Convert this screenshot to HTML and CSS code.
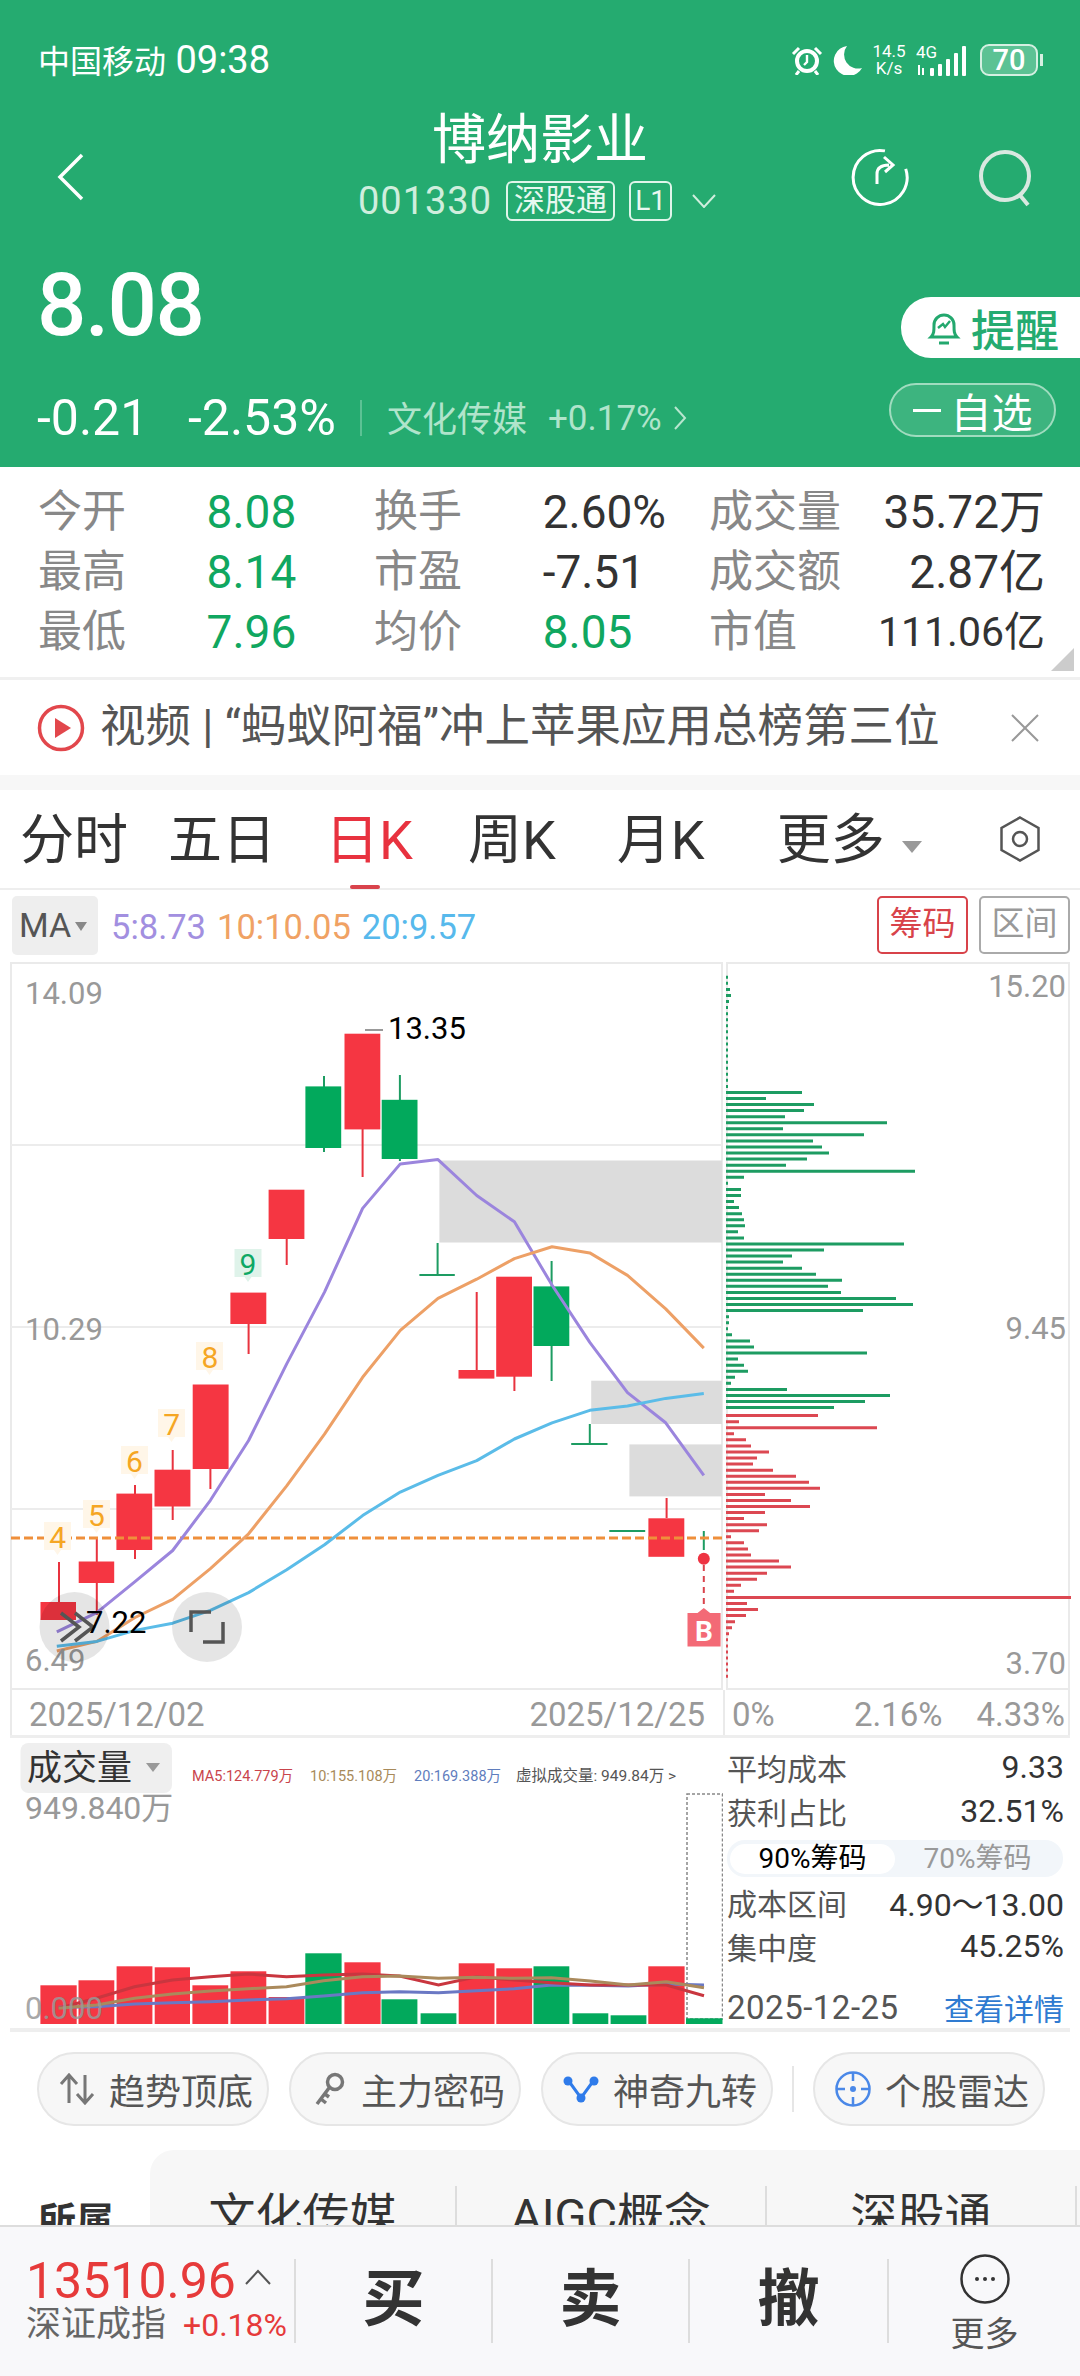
FILE: index.html
```html
<!DOCTYPE html>
<html lang="zh-CN">
  <head>
    <meta charset="UTF-8" />
    <meta name="viewport" content="width=device-width, initial-scale=1.0" />
    <title>博纳影业</title>
    <link rel="stylesheet" href="styles.css">
  </head>
  <body>
    <div class="page">
      <!-- Green stock header -->
      <header class="header">
        <div class="status">
          <div class="carrier"><span class="carrier-name">中国移动</span> <span>09:38</span></div>
          <div class="status-icons">
            <svg class="alarm" viewBox="0 0 32 30" width="32" height="30">
              <circle cx="16" cy="16" r="10" fill="none" stroke="#fff" stroke-width="4" />
              <path d="M16 10v7l-3 3" fill="none" stroke="#fff" stroke-width="2.4" />
              <path d="M2 9l6-6M30 9l-6-6M8 26l-3 4M24 26l3 4" stroke="#fff" stroke-width="3" />
            </svg>
            <svg class="moon" viewBox="0 0 30 30" width="30" height="30">
              <path d="M15 1a15 15 0 1 0 15 22A14 14 0 0 1 15 1z" fill="#fff" />
            </svg>
            <div class="speed">14.5<br />K/s</div>
            <svg class="signal" viewBox="0 0 54 34" width="54" height="34">
              <text class="net-text" x="0" y="15">4G</text>
              <path d="M3 22v10M7 25v7" stroke="#fff" stroke-width="2" />
              <rect x="14" y="25" width="4" height="8" rx="1" fill="#fff" />
              <rect x="22" y="21" width="4" height="12" rx="1" fill="#fff" />
              <rect x="30" y="16" width="4" height="17" rx="1" fill="#fff" />
              <rect x="38" y="10" width="4" height="23" rx="1" fill="#fff" />
              <rect x="46" y="3" width="4" height="30" rx="1" fill="#fff" />
            </svg>
            <div class="battery"><span class="battery-body">70</span><span class="battery-tip"></span></div>
          </div>
        </div>

        <div class="nav">
          <div class="nav-left">
            <svg viewBox="0 0 28 48" width="28" height="48">
              <path d="M25 2L3 24l22 22" fill="none" stroke="#fff" stroke-width="3.5" />
            </svg>
          </div>
          <div class="nav-center">
            <div class="stock-name">博纳影业</div>
            <div class="stock-sub">
              <span class="stock-code">001330</span>
              <span class="tag">深股通</span>
              <span class="tag tag-l1">L1</span>
              <svg class="sub-arrow" viewBox="0 0 24 14" width="24" height="14">
                <path d="M1 1l11 12L23 1" fill="none" stroke="#cfeedd" stroke-width="2" />
              </svg>
            </div>
          </div>
          <div class="nav-right">
            <svg viewBox="0 0 60 60" width="60" height="60">
              <path d="M41 7A27 27 0 1 0 56 30" fill="none" stroke="#fff" stroke-width="3" transform="rotate(-16 30 31)" />
              <path d="M26 38V28c0-6 4-9 12-9M33 11l9 8-8 7" fill="none" stroke="#fff" stroke-width="3" />
            </svg>
            <svg class="search-icon" viewBox="0 0 56 58" width="56" height="58">
              <circle cx="27" cy="26" r="24" fill="none" stroke="#d9e8e0" stroke-width="4" />
              <path d="M41 44l9 11" stroke="#d9e8e0" stroke-width="4" />
            </svg>
          </div>
        </div>

        <div class="quote">
          <div class="quote-left">
            <div class="price">8.08</div>
            <div class="change">
              <span class="change-num">-0.21</span>
              <span class="change-pct">-2.53%</span>
              <span class="change-sep"></span>
              <span class="sector">文化传媒</span>
              <span class="sector-pct">+0.17%</span>
              <svg viewBox="0 0 14 26" width="14" height="26">
                <path d="M2 2l10 11L2 24" fill="none" stroke="#b7e6cf" stroke-width="2" />
              </svg>
            </div>
          </div>
          <div class="quote-right">
            <div class="remind">
              <svg viewBox="0 0 36 40" width="36" height="40">
                <path d="M5 29c3-3 3-6 3-12a10 10 0 0 1 20 0c0 6 0 9 3 12z" fill="none" stroke="#23a86e" stroke-width="3" />
                <path d="M12 20l5-4 2 3 5-6" fill="none" stroke="#23a86e" stroke-width="2.4" />
                <path d="M13 35h10" stroke="#23a86e" stroke-width="3" />
              </svg>
              <span>提醒</span>
            </div>
            <div class="watch"><span class="watch-dash"></span><span>自选</span></div>
          </div>
        </div>
      </header>

      <!-- Quote figures -->
      <section class="stats">
        <span class="label">今开</span><span class="num down">8.08</span>
        <span class="label">换手</span><span class="num">2.60%</span>
        <span class="label">成交量</span><span class="num right">35.72万</span>
        <span class="label">最高</span><span class="num down">8.14</span>
        <span class="label">市盈</span><span class="num">-7.51</span>
        <span class="label">成交额</span><span class="num right">2.87亿</span>
        <span class="label">最低</span><span class="num down">7.96</span>
        <span class="label">均价</span><span class="num down">8.05</span>
        <span class="label">市值</span><span class="num right narrow">111.06亿</span>
        <span class="stats-corner"></span>
      </section>

      <section class="news">
        <svg viewBox="0 0 48 48" width="48" height="48">
          <circle cx="24" cy="24" r="21.5" fill="none" stroke="#e2474c" stroke-width="3.5" />
          <path d="M18 14l16 10-16 10z" fill="#e2474c" />
        </svg>
        <span class="news-text">视频 | “蚂蚁阿福”冲上苹果应用总榜第三位</span>
        <svg class="news-close" viewBox="0 0 28 28" width="28" height="28">
          <path d="M1 1l26 26M27 1L1 27" stroke="#999" stroke-width="2" />
        </svg>
      </section>
      <div class="band"></div>

      <!-- Period tabs -->
      <nav class="tabs">
        <span class="tab tab-a">分时</span>
        <span class="tab tab-b">五日</span>
        <span class="tab tab-c active">日K</span>
        <span class="tab tab-d">周K</span>
        <span class="tab tab-e">月K</span>
        <span class="tab tab-f">更多<i class="tab-tri"></i></span>
        <svg class="tab-gear" viewBox="0 0 42 46" width="42" height="46">
          <path d="M21 1.5L39.5 12v22L21 44.5 2.5 34V12z" fill="none" stroke="#555" stroke-width="2.5" />
          <circle cx="21" cy="23" r="7" fill="none" stroke="#555" stroke-width="2.5" />
        </svg>
      </nav>

      <div class="toolbar">
        <div class="ma-box">MA<i class="small-tri"></i></div>
        <div class="ma-values">
          <span class="c-ma5">5:8.73</span>
          <span class="c-ma10">10:10.05</span>
          <span class="c-ma20">20:9.57</span>
        </div>
        <span class="tool-btn tool-on">筹码</span>
        <span class="tool-btn">区间</span>
      </div>

      <!-- Candlestick chart and chip distribution -->
      <div class="chart-row">
        <svg class="kline" viewBox="10 962 713 728" width="713" height="728">
          <rect class="frame" x="11" y="963" width="711" height="726" />
          <path class="grid" d="M11 1145H722M11 1327H722M11 1509H722" />

          <rect class="box" x="439.4" y="1160.5" width="282.6" height="82" />
          <rect class="box" x="591.2" y="1380.7" width="130.8" height="43.3" />
          <rect class="box" x="629.4" y="1444.4" width="92.6" height="52" />

          <path class="wick-red" d="M59 1562v40M96.8 1539v76M135 1485v74M172.7 1450v70M210.4 1469v20M248.6 1324v30M286.7 1239v26M362.6 1129v48M476.7 1292v78M514.4 1376v15M666.6 1498v20" />
          <path class="wick-green" d="M324 1076v76M399.9 1075v86M551.6 1261v120M437.6 1243v32M419.4 1275h35.4M589.8 1424v20M571.2 1444h36.3M609.3 1531h35.9M703.8 1531v19" />

          <rect class="red" x="40.5" y="1602" width="35.5" height="18" />
          <rect class="red" x="78.7" y="1561.5" width="35.5" height="21.5" />
          <rect class="red" x="116.4" y="1493.6" width="35.8" height="56.4" />
          <rect class="red" x="154.5" y="1469.7" width="35.9" height="36.8" />
          <rect class="red" x="192.7" y="1384.5" width="35.9" height="84.5" />
          <rect class="red" x="230.4" y="1292.6" width="35.9" height="31.4" />
          <rect class="red" x="268.6" y="1189.7" width="35.8" height="49.3" />
          <rect class="green" x="305.4" y="1086.4" width="35.8" height="61.6" />
          <rect class="red" x="344.5" y="1033.7" width="35.8" height="95.7" />
          <rect class="green" x="381.7" y="1099.8" width="35.8" height="59.2" />
          <rect class="red" x="458.5" y="1370" width="35.9" height="8.6" />
          <rect class="red" x="496.2" y="1276.7" width="35.8" height="100" />
          <rect class="green" x="533.5" y="1286.4" width="35.8" height="59.6" />
          <rect class="red" x="648.4" y="1518.3" width="35.9" height="38.5" />

          <path class="price-line" d="M11 1538H722" />

          <polyline class="ma5" points="56.8,1631.9 96.8,1612.7 135,1581.6 172.7,1550.5 210.4,1500.3 248.6,1440.5 286.7,1363.9 324.5,1292.1 362.6,1208.4 400.3,1163.9 438,1159.6 476.7,1195.5 514.4,1221.8 552,1285 589.8,1342.4 627.5,1392.6 665.7,1422.8 703.8,1475.4" />
          <polyline class="ma10" points="56.8,1651 96.8,1641.4 135,1617.5 172.7,1599.3 210.4,1568.7 248.6,1533.8 286.7,1485.9 324.5,1434.2 362.6,1377.3 400.3,1330.4 438,1298.3 476.7,1279.2 514.4,1258.6 552,1246.7 589.8,1252.9 627.5,1275.4 665.7,1308.9 703.8,1348.1" />
          <polyline class="ma20" points="56.8,1646.2 96.8,1641.4 135,1630.4 172.7,1623.2 210.4,1610.3 248.6,1592.6 286.7,1569.7 324.5,1544.8 362.6,1515.6 400.3,1492.1 438,1475.4 476.7,1460.6 514.4,1439 552,1422.8 589.8,1410.3 627.5,1406 665.7,1398.4 703.8,1393.6" />

          <!-- Nine-turn counters -->
          <path class="tag-bg" d="M44 1522h27v28h-10l-3.5 5-3.5-5H44z" />
          <path class="tag-bg" d="M83 1500h27v28h-10l-3.5 5-3.5-5H83z" />
          <path class="tag-bg" d="M121 1446h27v28h-10l-3.5 5-3.5-5h-10z" />
          <path class="tag-bg" d="M158 1409h27v28h-10l-3.5 5-3.5-5h-10z" />
          <path class="tag-bg" d="M196 1342h27v28h-10l-3.5 5-3.5-5h-10z" />
          <path class="tag-bg-green" d="M234.5 1249h27v28h-10l-3.5 5-3.5-5h-10z" />
          <text class="count" x="57.7" y="1548">4</text>
          <text class="count" x="96.4" y="1526">5</text>
          <text class="count" x="134.5" y="1472">6</text>
          <text class="count" x="171.8" y="1435">7</text>
          <text class="count" x="210" y="1368">8</text>
          <text class="count count-green" x="248" y="1275">9</text>

          <path class="note-line" d="M365 1030h18" />
          <text class="note" x="388" y="1039">13.35</text>

          <text class="axis" x="25" y="1004">14.09</text>
          <text class="axis" x="25" y="1340">10.29</text>
          <text class="axis" x="25" y="1671">6.49</text>

          <circle class="float-btn" cx="74.5" cy="1627" r="35" />
          <circle class="float-btn" cx="207" cy="1627" r="35" />
          <path class="float-icon" d="M61 1613l18 14-18 14M75 1613l18 14-18 14" />
          <path class="float-icon" d="M191 1632v-20h20M223 1622v20h-20" />
          <text class="note" x="86" y="1633">7.22</text>

          <circle class="sig-dot" cx="703.8" cy="1558.8" r="6" />
          <path class="sig-dash" d="M703.8 1565v44" />
          <path class="sig-badge" d="M687.5 1613h10l6.3-5 6.3 5h10.5v33.5h-33.1z" />
          <text class="sig-text" x="704" y="1641">B</text>
        </svg>

        <svg class="chips" viewBox="726 962 345 728" width="345" height="728">
          <rect class="frame" x="727" y="963" width="342" height="726" />
          <path class="chip-green" d="M726 977.3h2m-2 6.06h2m-2 6.06h4m-4 6.06h5m-5 6.06h3m-3 6.06h2m-2 6.06h2m-2 6.06h2m-2 6.06h2m-2 6.06h2m-2 6.06h2m-2 6.06h2m-2 6.06h2m-2 6.06h2m-2 6.06h2m-2 6.06h2m-2 6.06h2m-2 6.06h2m-2 6.06h2m-2 6.06h76m-76 6.06h40m-40 6.06h88m-88 6.06h78m-78 6.06h59m-59 6.06h161m-161 6.06h57m-57 6.06h138m-138 6.06h87m-87 6.06h96m-96 6.06h103m-103 6.06h81m-81 6.06h60m-60 6.06h189m-189 6.06h18m-18 6.06h2m-2 6.06h15m-15 6.06h15m-15 6.06h8m-8 6.06h13m-13 6.06h16m-16 6.06h18m-18 6.06h19m-19 6.06h12m-12 6.06h18m-18 6.06h178m-178 6.06h98m-98 6.06h66m-66 6.06h57m-57 6.06h76m-76 6.06h90m-90 6.06h116m-116 6.06h102m-102 6.06h115m-115 6.06h170m-170 6.06h187m-187 6.06h137m-137 6.06h3m-3 6.06h3m-3 6.06h2m-2 6.06h6m-6 6.06h24m-24 6.06h28m-28 6.06h141m-141 6.06h12m-12 6.06h18m-18 6.06h22m-22 6.06h9m-9 6.06h5m-5 6.06h61m-61 6.06h164m-164 6.06h139m-139 6.06h108" />
          <path class="chip-red" d="M726 1415.6h92m-92 6.06h13m-13 6.06h151m-151 6.06h8m-8 6.06h20m-20 6.06h25m-25 6.06h43m-43 6.06h31m-31 6.06h27m-27 6.06h47m-47 6.06h70m-70 6.06h83m-83 6.06h94m-94 6.06h39m-39 6.06h65m-65 6.06h84m-84 6.06h39m-39 6.06h18m-18 6.06h41m-41 6.06h33m-33 6.06h5m-5 6.06h18m-18 6.06h22m-22 6.06h25m-25 6.06h53m-53 6.06h65m-65 6.06h41m-41 6.06h31m-31 6.06h15m-15 6.06h8m-8 6.06h345m-345 6.06h21m-21 6.06h32m-32 6.06h20m-20 6.06h9m-9 6.06h6m-6 6.06h3m-3 6.06h2m-2 6.06h2m-2 6.06h2m-2 6.06h2m-2 6.06h2m-2 6.06h2m-2 6.06h2" />
          <text class="axis axis-end" x="1066" y="997">15.20</text>
          <text class="axis axis-end" x="1066" y="1339">9.45</text>
          <text class="axis axis-end" x="1066" y="1674">3.70</text>
        </svg>
      </div>

      <div class="axis-row">
        <div class="date-axis"><span>2025/12/02</span><span>2025/12/25</span></div>
        <div class="pct-axis"><span>0%</span><span class="pct-mid">2.16%</span><span class="pct-end">4.33%</span></div>
      </div>

      <!-- Volume chart and chip summary -->
      <div class="volume-row">
        <svg class="volume" viewBox="10 1738 713 290" width="713" height="290">
          <rect class="vol-label-bg" x="20.5" y="1743" width="151.5" height="50" rx="8" />
          <text class="vol-label" x="27" y="1780">成交量</text>
          <path class="vol-tri" d="M146 1763h14l-7 9z" />
          <text class="vol-ma vm5" x="192" y="1781">MA5:124.779万</text>
          <text class="vol-ma vm10" x="310" y="1781">10:155.108万</text>
          <text class="vol-ma vm20" x="414" y="1781">20:169.388万</text>
          <text class="vol-ma vmv" x="516" y="1781">虚拟成交量: 949.84万 &gt;</text>
          <text class="axis axis-big" x="25" y="1819">949.840万</text>

          <rect class="vol-box" x="687" y="1794" width="35.5" height="225" />

          <rect class="red" x="40.4" y="1985.3" width="36.3" height="38.7" />
          <rect class="red" x="78.5" y="1980.3" width="35.8" height="43.7" />
          <rect class="red" x="116.6" y="1966.3" width="35.8" height="57.7" />
          <rect class="red" x="154.7" y="1967.3" width="35.3" height="56.7" />
          <rect class="red" x="192.4" y="1985.3" width="35.8" height="38.7" />
          <rect class="red" x="230.5" y="1971.3" width="35.8" height="52.7" />
          <rect class="red" x="268.6" y="1997" width="35.8" height="27" />
          <rect class="green" x="305.3" y="1953.3" width="36.3" height="70.7" />
          <rect class="red" x="344.4" y="1962.3" width="36.2" height="61.7" />
          <rect class="green" x="381.5" y="1999.3" width="35.9" height="24.7" />
          <rect class="green" x="420.6" y="2013.3" width="35.8" height="10.7" />
          <rect class="red" x="458.7" y="1963.3" width="35.8" height="60.7" />
          <rect class="red" x="496.3" y="1968.3" width="35.8" height="55.7" />
          <rect class="green" x="533.5" y="1966.3" width="35.8" height="57.7" />
          <rect class="green" x="572.5" y="2013.3" width="35.8" height="10.7" />
          <rect class="green" x="610.6" y="2015.3" width="35.8" height="8.7" />
          <rect class="red" x="648.3" y="1966.3" width="36.3" height="57.7" />
          <rect class="green" x="686" y="2018.3" width="36.5" height="5.7" />

          <polyline class="vline vline-blue" points="58.6,2007.3 96.4,2006.7 134.5,2004 172.4,2002.7 210.3,2001.7 248.4,2000 286.5,1998.7 323.5,1996 362.5,1992.7 399.5,1991.7 438.5,1992.7 476.6,1990.7 514.2,1988.7 551.4,1985 590.4,1985.3 628.5,1986 666.4,1984 704,1985" />
          <polyline class="vline vline-red" points="58.6,2008.3 96.4,1998.3 134.5,1986.7 172.4,1980 210.3,1976.7 248.4,1974 286.5,1976.7 323.5,1975 362.5,1974 399.5,1976 438.5,1985 476.6,1976.7 514.2,1980 551.4,1982.7 590.4,1985 628.5,1985 666.4,1985 704,1995.7" />
          <polyline class="vline vline-brown" points="58.6,2008.3 96.4,2005 134.5,1998.3 172.4,1994 210.3,1991 248.4,1988.7 286.5,1986.7 323.5,1980.7 362.5,1976.7 399.5,1976 438.5,1978.3 476.6,1977.3 514.2,1978.3 551.4,1977.7 590.4,1981 628.5,1985 666.4,1981.7 704,1987.7" />
          <text class="axis axis-faded" x="25" y="2019">0.000</text>
        </svg>

        <div class="chip-info">
          <div class="info-row"><span>平均成本</span><b>9.33</b></div>
          <div class="info-row"><span>获利占比</span><b>32.51%</b></div>
          <div class="segment">
            <span class="seg seg-on">90%筹码</span>
            <span class="seg">70%筹码</span>
          </div>
          <div class="info-row"><span>成本区间</span><b>4.90～13.00</b></div>
          <div class="info-row"><span>集中度</span><b>45.25%</b></div>
          <div class="info-row info-foot"><span class="foot-date">2025-12-25</span><a class="detail-link">查看详情</a></div>
        </div>
      </div>

      <!-- Tool pills -->
      <div class="pills">
        <div class="pill">
          <svg viewBox="0 0 36 32" width="36" height="32">
            <path d="M10 30V3M2 11l8-9 8 9M26 2v27M18 21l8 9 8-9" fill="none" stroke="#777" stroke-width="3" />
          </svg>
          <span>趋势顶底</span>
        </div>
        <div class="pill">
          <svg viewBox="0 0 36 34" width="36" height="34">
            <circle cx="24" cy="10" r="7.5" fill="none" stroke="#777" stroke-width="3.5" />
            <path d="M18 16L6 32M10 27l5 4M14 22l4 3" fill="none" stroke="#777" stroke-width="3.5" />
          </svg>
          <span>主力密码</span>
        </div>
        <div class="pill">
          <svg viewBox="0 0 36 28" width="36" height="28">
            <path d="M5 5l13 18L31 5" fill="none" stroke="#2f7bea" stroke-width="3" />
            <circle cx="5" cy="6" r="4.5" fill="#2f7bea" />
            <circle cx="31" cy="6" r="4.5" fill="#2f7bea" />
            <circle cx="18" cy="23" r="4.5" fill="#2f7bea" />
          </svg>
          <span>神奇九转</span>
        </div>
        <span class="pill-sep"></span>
        <div class="pill">
          <svg viewBox="0 0 36 38" width="36" height="38">
            <circle cx="18" cy="19" r="16.5" fill="none" stroke="#4a88e8" stroke-width="2.5" />
            <path d="M18 2v9M18 27v9M1 19h9M26 19h9" stroke="#4a88e8" stroke-width="2.5" />
            <circle cx="18" cy="19" r="3" fill="#4a88e8" />
          </svg>
          <span>个股雷达</span>
        </div>
      </div>

      <!-- Related sectors, cut off by the bottom bar -->
      <div class="sectors">
        <div class="sector-title">所属</div>
        <div class="sector-band">
          <span class="sector-item sector-a">文化传媒</span>
          <span class="sector-item sector-b">AIGC概念</span>
          <span class="sector-item sector-c">深股通</span>
        </div>
      </div>

      <footer class="bottom">
        <div class="index">
          <div class="index-top"><span class="index-num">13510.96</span>
            <svg viewBox="0 0 26 16" width="26" height="16">
              <path d="M1 15L13 2l12 13" fill="none" stroke="#555" stroke-width="2" />
            </svg>
          </div>
          <div class="index-sub"><span class="index-name">深证成指</span><span class="index-pct">+0.18%</span></div>
        </div>
        <div class="trade">买</div>
        <div class="trade">卖</div>
        <div class="trade">撤</div>
        <div class="more">
          <svg viewBox="0 0 50 50" width="50" height="50">
            <circle cx="25" cy="25" r="23.5" fill="none" stroke="#333" stroke-width="2.5" />
            <circle cx="17" cy="25" r="2" fill="#333" />
            <circle cx="25" cy="25" r="2" fill="#333" />
            <circle cx="33" cy="25" r="2" fill="#333" />
          </svg>
          <span>更多</span>
        </div>
      </footer>
    </div>
  </body>
</html>
```

FILE: styles.css
```css
* {
  box-sizing: border-box;
}
body {
  margin: 0;
  background-color: #fff;
  font-family: Roboto, "Noto Sans CJK SC", sans-serif;
  color: #333;
}
.page {
  width: 1080px;
  height: 2376px;
  overflow: hidden;
}

/* Header */
.header {
  height: 467px;
  background-color: #25ab70;
  color: #fff;
}
.status {
  height: 117px;
  padding: 40px 37px 0 38px;
  display: flex;
  justify-content: space-between;
  align-items: flex-start;
}
.carrier {
  font-size: 38px;
  line-height: 40px;
}
.carrier-name {
  font-size: 32px;
}
.status-icons {
  display: flex;
  align-items: center;
  height: 36px;
  margin-top: 2px;
  gap: 9px;
}
.speed {
  width: 36px;
  font-size: 17px;
  line-height: 17px;
  text-align: center;
}
.net-text {
  font-size: 17px;
  fill: #fff;
}
.battery {
  display: flex;
  align-items: center;
  margin-left: 1px;
}
.battery-body {
  width: 58px;
  height: 32px;
  border: 2px solid #d5f0e2;
  border-radius: 9px;
  background-color: #5cc294;
  font-size: 29px;
  font-weight: 500;
  line-height: 28px;
  text-align: center;
}
.battery-tip {
  width: 3px;
  height: 12px;
  margin-left: 2px;
  background-color: #d5f0e2;
}
.nav {
  height: 106px;
  display: grid;
  grid-template-columns: 300px 480px 300px;
}
.nav-left {
  padding: 36px 0 0 57px;
}
.nav-center {
  text-align: center;
}
.stock-name {
  font-size: 54px;
  line-height: 60px;
  margin-top: -6px;
}
.stock-sub {
  display: flex;
  align-items: center;
  justify-content: center;
  margin-top: 9px;
  height: 42px;
  padding-right: 6px;
}
.stock-code {
  font-size: 38px;
  letter-spacing: 1px;
  color: #cfeedd;
  margin-right: 14px;
}
.tag {
  border: 2px solid #dff5ea;
  border-radius: 6px;
  height: 40px;
  width: 109px;
  font-size: 31px;
  line-height: 35px;
  color: #e8f8f0;
  text-align: center;
}
.tag-l1 {
  width: 43px;
  margin-left: 14px;
  font-size: 28px;
}
.sub-arrow {
  margin-left: 20px;
}
.nav-right {
  display: flex;
  gap: 67px;
  padding: 29px 0 0 71px;
  align-items: flex-start;
}
.search-icon {
  margin-top: 4px;
}
.quote {
  display: flex;
  justify-content: space-between;
  margin-top: 39px;
}
.quote-left {
  padding-left: 37px;
}
.price {
  font-size: 87px;
  line-height: 80px;
  letter-spacing: -1.5px;
  font-weight: 500;
  padding-top: 3px;
  height: 83px;
}
.change {
  display: flex;
  align-items: center;
  height: 44px;
  margin-top: 51px;
  font-size: 50px;
}
.change-num {
  width: 151px;
}
.change-pct {
  width: 172px;
}
.change-sep {
  width: 2px;
  height: 36px;
  background-color: #5cc294;
  margin-right: 25px;
}
.sector {
  font-size: 35px;
  color: #b0e4cb;
  margin-right: 21px;
  margin-top: -4px;
}
.sector-pct {
  font-size: 35px;
  color: #b0e4cb;
  margin-right: 11px;
}
.quote-right {
  display: flex;
  flex-direction: column;
  align-items: flex-end;
  padding-top: 35px;
}
.remind {
  width: 179px;
  height: 61px;
  display: flex;
  align-items: center;
  gap: 9px;
  padding-left: 25px;
  background-color: #fff;
  border-radius: 30px 0 0 30px;
  color: #25ab70;
  font-size: 44px;
  font-weight: 500;
}
.watch {
  width: 167px;
  height: 54px;
  margin: 25px 24px 0 0;
  display: flex;
  align-items: center;
  justify-content: center;
  gap: 10px;
  border: 2px solid #a0dcbf;
  border-radius: 27px;
  background-color: #3db47f;
  font-size: 41px;
}
.watch-dash {
  width: 28px;
  height: 3px;
  background-color: #fff;
}

/* Quote figures */
.stats {
  position: relative;
  height: 213px;
  padding: 15px 35px 0 38px;
  border-bottom: 3px solid #f0f0f0;
  display: grid;
  grid-template-columns: 168.6px 167.4px 168.7px 166.3px 140px 1fr;
  grid-auto-rows: 60px;
  align-items: center;
}
.label {
  font-size: 44px;
  color: #888;
  line-height: 60px;
}
.num {
  font-size: 46px;
  line-height: 60px;
  color: #333;
  white-space: nowrap;
}
.num.down {
  color: #10a760;
}
.num.right {
  text-align: right;
}
.num.narrow {
  font-size: 41px;
}
.stats-corner {
  position: absolute;
  right: 6px;
  bottom: 6px;
  border-style: solid;
  border-width: 0 0 23px 23px;
  border-color: transparent transparent #ccc transparent;
}
.news {
  height: 95px;
  display: flex;
  align-items: center;
  padding: 0 41px 0 37px;
}
.news-text {
  margin: -2px 0 0 15px;
  font-size: 45.5px;
  line-height: 60px;
  color: #555;
  white-space: nowrap;
}
.news-close {
  margin-left: auto;
}
.band {
  height: 15px;
  background-color: #f7f7f7;
}

/* Tabs */
.tabs {
  height: 100px;
  display: flex;
  align-items: center;
  position: relative;
  border-bottom: 2px solid #eee;
  font-size: 54px;
  line-height: 64px;
  color: #333;
}
.tab {
  white-space: nowrap;
  margin-top: 4px;
}
.tab-a {
  margin-left: 20px;
}
.tab-b {
  margin-left: 40px;
}
.tab-c {
  margin-left: 49px;
}
.tab-d {
  margin-left: 55px;
}
.tab-e {
  margin-left: 61px;
}
.tab-f {
  margin-left: 72px;
}
.tab-gear {
  margin-left: 77px;
}
.tab.active {
  color: #e8323f;
  position: relative;
}
.tab.active::after {
  content: "";
  position: absolute;
  left: 25px;
  bottom: -16px;
  width: 30px;
  height: 4px;
  border-radius: 2px;
  background-color: #d9434c;
}
.tab-tri {
  display: inline-block;
  margin: 0 0 6px 17px;
  border-style: solid;
  border-width: 12px 10px 0 10px;
  border-color: #999 transparent transparent transparent;
}
.toolbar {
  height: 65px;
  display: flex;
  align-items: flex-start;
  padding-top: 6px;
}
.ma-box {
  width: 86px;
  height: 59px;
  margin-left: 12px;
  border-radius: 5px;
  background-color: #eee;
  font-size: 34px;
  line-height: 59px;
  color: #555;
  padding-left: 7px;
  white-space: nowrap;
}
.small-tri {
  display: inline-block;
  margin: 0 0 6px 4px;
  border-style: solid;
  border-width: 9px 6px 0 6px;
  border-color: #888 transparent transparent transparent;
}
.ma-values {
  width: 766px;
  margin-left: 13px;
  font-size: 34.5px;
  line-height: 62px;
  display: flex;
  gap: 11px;
}
.c-ma5 {
  color: #a28fe0;
}
.c-ma10 {
  color: #f0a264;
}
.c-ma20 {
  color: #57b9ec;
}
.tool-btn {
  width: 91px;
  height: 58px;
  margin-right: 11px;
  border: 2px solid #aaa;
  border-radius: 5px;
  color: #999;
  font-size: 33px;
  line-height: 52px;
  text-align: center;
}
.tool-on {
  border-color: #d8434a;
  color: #d8434a;
}
.tool-btn:last-child {
  margin-right: 0;
}

/* Charts */
.chart-row {
  height: 735px;
  padding: 7px 0 0 10px;
  display: flex;
  gap: 3px;
}
.chart-row svg,
.volume {
  display: block;
  flex: none;
}
.frame {
  fill: none;
  stroke: #eaeaea;
  stroke-width: 2;
}
.grid {
  stroke: #ececec;
  stroke-width: 2;
}
.box {
  fill: #dcdcdc;
}
.red {
  fill: #f53642;
}
.green {
  fill: #02a95c;
}
.wick-red {
  fill: none;
  stroke: #e8333f;
  stroke-width: 2;
}
.wick-green {
  fill: none;
  stroke: #1d9c62;
  stroke-width: 2;
}
.price-line {
  stroke: #ef8f3b;
  stroke-width: 3;
  stroke-dasharray: 9 4;
}
.ma5,
.ma10,
.ma20 {
  fill: none;
  stroke-width: 3;
  stroke-linejoin: round;
}
.ma5 {
  stroke: #9b85dd;
}
.ma10 {
  stroke: #eda066;
}
.ma20 {
  stroke: #5bbce8;
}
.tag-bg {
  fill: #fff6e8;
}
.tag-bg-green {
  fill: #dff3ea;
}
.count {
  font-size: 30px;
  fill: #f5a623;
  text-anchor: middle;
}
.count-green {
  fill: #0ea864;
}
.note-line {
  stroke: #777;
  stroke-width: 1.5;
}
.note {
  font-size: 31px;
  fill: #000;
}
.axis {
  font-size: 31px;
  fill: #999;
}
.axis-big {
  font-size: 32px;
}
.axis-end {
  text-anchor: end;
}
.axis-faded {
  opacity: 0.85;
}
.float-btn {
  fill: #000;
  fill-opacity: 0.1;
}
.float-icon {
  fill: none;
  stroke: #555;
  stroke-width: 3.5;
}
.sig-dot {
  fill: #ee3342;
}
.sig-dash {
  stroke: #d9434c;
  stroke-width: 2;
  stroke-dasharray: 6 5;
}
.sig-badge {
  fill: #f36a76;
}
.sig-text {
  font-size: 28px;
  font-weight: 700;
  fill: #fff;
  text-anchor: middle;
}
.chip-green,
.chip-red {
  fill: none;
  stroke-width: 3;
}
.chip-green {
  stroke: #1d9c62;
}
.chip-red {
  stroke: #dc4852;
}
.axis-row {
  height: 48px;
  display: flex;
  border-bottom: 3px solid #eee;
  margin: 0 10px;
  font-size: 33px;
  color: #999;
  line-height: 50px;
}
.date-axis {
  width: 713px;
  display: flex;
  justify-content: space-between;
  padding: 0 18px 0 17px;
  border-left: 2px solid #eaeaea;
}
.pct-axis {
  flex: 1;
  display: flex;
  padding: 0 3px 0 7px;
  border-left: 2px solid #eaeaea;
  border-right: 2px solid #eaeaea;
}
.pct-mid {
  margin-left: auto;
}
.pct-end {
  margin-left: 34px;
}
.volume-row {
  height: 290px;
  display: flex;
  margin-left: 10px;
}
.vol-label-bg {
  fill: #efefef;
}
.vol-label {
  font-size: 35px;
  fill: #333;
}
.vol-tri {
  fill: #999;
}
.vol-ma {
  font-size: 14.5px;
}
.vm5 {
  fill: #c9444c;
}
.vm10 {
  fill: #a88a5a;
}
.vm20 {
  fill: #5f7dbd;
}
.vmv {
  font-size: 15.5px;
  fill: #555;
}
.vol-box {
  fill: none;
  stroke: #888;
  stroke-width: 1.5;
  stroke-dasharray: 3 2;
}
.vline {
  fill: none;
  stroke-width: 3;
}
.vline-red {
  stroke: #c9363f;
}
.vline-brown {
  stroke: #aa8a5c;
}
.vline-blue {
  stroke: #6a78c4;
}
.chip-info {
  width: 345px;
  margin-left: 4px;
  padding-top: 7px;
  font-size: 30px;
  color: #555;
}
.info-row {
  height: 44px;
  display: flex;
  justify-content: space-between;
  align-items: center;
  padding-right: 8px;
}
.info-row b {
  font-size: 32px;
  font-weight: 400;
  color: #333;
}
.segment {
  width: 336px;
  height: 37px;
  margin: 7px 0 3px;
  display: flex;
  align-items: center;
  padding: 0 3px;
  background-color: #f2f6fa;
  border-radius: 18px;
  font-size: 28px;
  color: #999;
}
.seg {
  width: 165px;
  height: 30px;
  line-height: 30px;
  text-align: center;
  white-space: nowrap;
}
.seg-on {
  background-color: #fff;
  border-radius: 15px;
  color: #000;
}
.info-foot {
  margin-top: 17px;
}
.foot-date {
  font-size: 33px;
  letter-spacing: 0.5px;
}
.detail-link {
  color: #2f7bd1;
}

/* Pills */
.pills {
  height: 122px;
  padding: 20px 0 0 27px;
  display: flex;
  align-items: flex-start;
  gap: 20px;
  border-top: 4px solid #eee;
  margin: 0 10px;
}
.pill {
  width: 232px;
  height: 74px;
  display: flex;
  align-items: center;
  gap: 14px;
  padding-left: 20px;
  background-color: #f7f7f7;
  border: 2px solid #e6e6e6;
  border-radius: 37px;
  font-size: 36px;
  color: #555;
  white-space: nowrap;
}
.pill-sep {
  width: 2px;
  height: 46px;
  margin: 14px -1px 0;
  background-color: #e6e6e6;
}

/* Sectors */
.sectors {
  height: 75px;
  display: flex;
  overflow: hidden;
}
.sector-title {
  width: 150px;
  padding: 46px 0 0 38px;
  font-size: 38px;
  font-weight: 700;
  line-height: 50px;
}
.sector-band {
  flex: 1;
  display: flex;
  background-color: #f7f7f7;
  border-radius: 24px 0 0 0;
  padding-top: 36px;
  font-size: 47px;
  line-height: 60px;
  white-space: nowrap;
}
.sector-item {
  height: 80px;
  text-align: center;
  border-right: 2px solid #ddd;
}
.sector-a {
  width: 307px;
}
.sector-b {
  width: 310px;
}
.sector-c {
  width: 310px;
}

/* Bottom bar */
.bottom {
  height: 151px;
  display: flex;
  align-items: flex-start;
  background-color: #f8f8fa;
  border-top: 2px solid #ddd;
  padding-top: 32px;
}
.index {
  width: 294px;
  padding-left: 26px;
  white-space: nowrap;
}
.index-top {
  display: flex;
  align-items: center;
  height: 44px;
}
.index-num {
  font-size: 50px;
  line-height: 44px;
  color: #e63a3a;
}
.index-top svg {
  margin-left: 9px;
  margin-top: -8px;
}
.index-sub {
  display: flex;
  align-items: center;
  margin-top: 2px;
  height: 40px;
  line-height: 40px;
}
.index-name {
  font-size: 35px;
  color: #666;
}
.index-pct {
  font-size: 32px;
  color: #e63a3a;
  margin-left: 17px;
}
.trade {
  width: 197px;
  height: 84px;
  border-left: 2px solid #ddd;
  font-size: 62px;
  font-weight: 700;
  line-height: 82px;
  text-align: center;
  color: #333;
}
.trade:nth-child(4) {
  width: 199px;
}
.more {
  flex: 1;
  height: 84px;
  border-left: 2px solid #ddd;
  display: flex;
  flex-direction: column;
  align-items: center;
  font-size: 34px;
  color: #555;
}
.more svg {
  flex: none;
  margin-top: -5px;
}
.more span {
  line-height: 40px;
  margin-top: 10px;
}
```
